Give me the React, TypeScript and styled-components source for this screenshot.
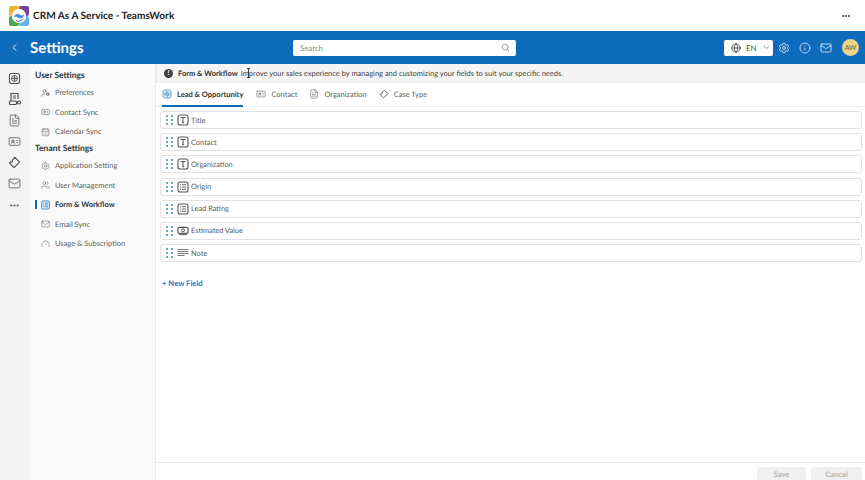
import React from "react";
import styled, { createGlobalStyle } from "styled-components";
import {
  ChevronLeft, ChevronDown, Search, Globe, Settings, Info, Mail, MoreHorizontal,
  UserCog, IdCard, CalendarDays, Users, Gauge, FileText,
} from "lucide-react";

const Global = createGlobalStyle`
  html, body { margin: 0; padding: 0; height: 100%; background: #fff; }
  #root { height: 100%; }
  * { box-sizing: border-box; }
  body { font-family: "Lato", "Noto Sans", "Liberation Sans", sans-serif; color: #333; text-rendering: geometricPrecision; }
`;

const Page = styled.div`
  width: 865px; height: 480px; overflow: hidden;
  display: flex; flex-direction: column;
`;
const TitleBar = styled.header`
  height: 31px; flex: none; display: flex; align-items: center;
  padding: 0 14px 0 9px; background: #fff;
`;
const AppName = styled.div`
  margin-left: 4px; font-size: 10.1px; font-weight: 700; color: #222;
  flex: 1;
`;
const HeaderBar = styled.div`
  height: 33px; flex: none; background: #0f6cbd; display: flex; align-items: center;
  padding: 0 6px 0 9px; color: #fff;
`;
const BackBtn = styled.span`display: flex; width: 11px; margin-right: 10px;`;
const PageTitle = styled.div`font-size: 15px; font-weight: 700; width: 263px; color: #fff;`;
const SearchBox = styled.div`
  width: 223px; height: 16px; background: #fff; border-radius: 2px;
  display: flex; align-items: center; justify-content: space-between; padding: 0 6px 0 7px;
  font-size: 7.8px; color: #8a8a8a;
`;
const HeaderRight = styled.div`
  margin-left: auto; display: flex; align-items: center; color: #fff;
`;
const LangBtn = styled.div`
  width: 49px; height: 16px; background: #fff; border-radius: 2px; color: #555;
  display: flex; align-items: center; padding-left: 7px; gap: 5px; font-size: 8px;
`;
const HeadIcon = styled.span`display: flex; width: 21px; justify-content: center;`;
const Avatar = styled.div`
  width: 17px; height: 17px; border-radius: 50%; background: #ecd48e; color: #6b5b2b;
  font-size: 7px; display: flex; align-items: center; justify-content: center; margin-left: 6px;
`;
const Body = styled.div`flex: 1; display: flex; min-height: 0;`;
const Rail = styled.nav`
  width: 29px; background: #f3f3f3; display: flex; flex-direction: column; align-items: center;
  padding-top: 7px; gap: 7.2px; color: #505050; flex: none;
`;
const RailIcon = styled.span`display: flex; width: 14px; height: 14px; align-items: center; justify-content: center;`;
const Side = styled.aside`
  width: 127px; flex: none; background: #fafafa; padding: 6px 0 0 6px;
  border-right: 1px solid #ececec;
`;
const SideHeading = styled.div`
  font-size: 8.5px; font-weight: 700; color: #333; height: 11px; line-height: 11px;
  margin-bottom: 2px;
`;
const SideGroup = styled.div`margin-bottom: 1px;`;
const SideItem = styled.div<{ $active?: boolean }>`
  height: 19.6px; display: flex; align-items: center; font-size: 7.5px; position: relative;
  color: ${p => (p.$active ? "#333" : "#616161")};
  font-weight: ${p => (p.$active ? 700 : 400)};
  padding-left: 6px; gap: 5px;
  ${p => p.$active && `&::before { content: ""; position: absolute; left: 0; top: 5px; height: 9px; width: 2px; background: #0f6cbd; }`}
`;
const SideIcon = styled.span<{ $active?: boolean }>`
  display: flex; width: 9px; justify-content: center; color: ${p => (p.$active ? "#2a7fc6" : "#555")};
`;
const Main = styled.main`flex: 1; min-width: 0; display: flex; flex-direction: column;`;
const InfoBar = styled.div`
  height: 19px; flex: none; background: #f5f5f5; display: flex; align-items: center; position: relative;
  padding-left: 7px; font-size: 7.5px; color: #444; gap: 5px; border-left: 1px solid #e6e6e6;
  border-bottom: 1px solid #eee;
`;
const InfoDot = styled.span`
  width: 9px; height: 9px; border-radius: 50%; background: #424242; color: #fff;
  display: flex; align-items: center; justify-content: center; font-size: 7px; font-weight: 700; line-height: 1;
`;
const Strong = styled.b`font-weight: 700; color: #333; margin-right: 1px;`;
const Caret = styled.span`
  position: absolute; left: 90px; top: 4px; width: 3px; height: 10px;
  border-top: 1px solid #444; border-bottom: 1px solid #444;
  &::after { content: ""; position: absolute; left: 1px; top: 0; bottom: 0; width: 1px; background: #444; }
`;
const Tabs = styled.div`
  height: 24px; flex: none; display: flex; padding-left: 6px;
  border-bottom: 1px solid #eee;
`;
const Tab = styled.div<{ $active?: boolean; $gap: number }>`
  display: flex; align-items: center; gap: 5px; font-size: 7.5px;
  margin-right: ${p => p.$gap}px;
  color: ${p => (p.$active ? "#333" : "#616161")};
  font-weight: ${p => (p.$active ? 700 : 400)};
  border-bottom: ${p => (p.$active ? "2px solid #0f6cbd" : "2px solid transparent")};
  height: 24px; margin-bottom: -1px;
`;
const TabIcon = styled.span<{ $active?: boolean }>`display: flex; color: ${p => (p.$active ? "#2a7fc6" : "#555")};`;
const Fields = styled.div`
  display: flex; flex-direction: column; gap: 4.2px; padding: 4px 3px 0 4px;
`;
const FieldRow = styled.div`
  height: 18px; border: 1px solid #e2e2e2; border-radius: 3px; background: #fff;
  display: flex; align-items: center; padding-left: 5px; font-size: 7.4px; color: #5c5c5c; gap: 2px;
`;
const Grip = styled.span`display: flex; color: #1f6fb5; width: 7px; margin-right: 2px; justify-content: center;`;
const FieldIcon = styled.span`display: flex; width: 12px; justify-content: center; color: #555;`;
const NewField = styled.div`
  margin: 15.5px 0 0 6px; font-size: 7.7px; font-weight: 700; color: #2a78bd; height: 11px; line-height: 11px;
`;
const Spacer = styled.div`flex: 1;`;
const Footer = styled.footer`
  height: 18px; flex: none; border-top: 1px solid #ececec; display: flex; justify-content: flex-end;
  gap: 5px; padding: 4px 3px 0 0;
`;
const FootBtn = styled.div<{ $w: number }>`
  width: ${p => p.$w}px; height: 14px; background: #f0f0f0; border-radius: 2px 2px 0 0;
  color: #b5b5b5; font-size: 7.6px; font-weight: 700; display: flex; align-items: center; justify-content: center;
`;

const Logo = () => (
  <svg width="20" height="20" viewBox="0 0 20 20">
    <rect x="0" y="0" width="10" height="10" rx="2" fill="#f0b429" />
    <rect x="10" y="0" width="10" height="10" rx="2" fill="#7a3f98" />
    <rect x="0" y="10" width="10" height="10" rx="2" fill="#4aa84a" />
    <rect x="10" y="10" width="10" height="10" rx="2" fill="#5db5e6" />
    <circle cx="10" cy="10" r="7.2" fill="#fff" />
    <path d="M4.5 11.5c1.5-3.5 4-4.5 6-3s3.5 1.5 5-1c-.5 4-3.500 6-6 4.500s-3.500-1.500-5-.5z" fill="#4a8fd0" />
    <path d="M7 14.500c2.500 1 5.500.5 7.500-2" stroke="#7a6fc0" strokeWidth="1.200" fill="none" />
  </svg>
);
const TIcon = () => (
  <svg width="12" height="12" viewBox="0 0 12 12" fill="none" stroke="currentColor">
    <rect x="1" y="1" width="10" height="10" rx="2" strokeWidth="1.100" />
    <path d="M3.500 3.500h5M6 3.500v5.200M5 8.700h2" strokeWidth="1" />
  </svg>
);
const ListIcon = () => (
  <svg width="12" height="12" viewBox="0 0 12 12" fill="none" stroke="currentColor">
    <rect x="1" y="1" width="10" height="10" rx="2" strokeWidth="1.100" />
    <path d="M3 3.700h1M5 3.700h4M3 6h1M5 6h4M3 8.300h1M5 8.300h4" strokeWidth=".9" />
  </svg>
);
const MoneyIcon = () => (
  <svg width="13" height="12" viewBox="0 0 13 12" fill="none" stroke="currentColor">
    <rect x="1" y="2" width="11" height="6.500" rx="1.500" strokeWidth="1.300" />
    <circle cx="6.500" cy="5.200" r="1.700" strokeWidth="1" />
    <path d="M2 10h9" strokeWidth="1" />
  </svg>
);
const NoteIcon = () => (
  <svg width="12" height="12" viewBox="0 0 12 12" fill="none" stroke="#777">
    <path d="M.5 2.500h11M.5 4.500h11M.5 6.500h11M.5 8.500h7" strokeWidth="1" />
  </svg>
);
const GripDots = () => (
  <svg width="7" height="10" viewBox="0 0 7 10" fill="currentColor">
    {[1, 5, 9].map(y => [1, 6].map(x => <rect key={`${x}${y}`} x={x - 0.8} y={y - 0.8} width="1.600" height="1.600" />))}
  </svg>
);
const BoardIcon = ({ size = 13 }: { size?: number }) => (
  <svg width={size} height={size} viewBox="0 0 14 14" fill="none" stroke="currentColor">
    <rect x="1.500" y="1.500" width="11" height="11" rx="2.500" strokeWidth="1.100" />
    <circle cx="7" cy="7" r="3.200" strokeWidth="1" />
    <path d="M3.800 7h6.400M7 3.800v6.400" strokeWidth="1" />
  </svg>
);
const FormIcon = () => (
  <svg width="10" height="10" viewBox="0 0 10 10" fill="#d8e9f6" stroke="#2a7fc6">
    <rect x=".5" y=".5" width="9" height="9" rx="1.500" strokeWidth=".9" />
    <path d="M2 3h1M4 3h4M2 5h1M4 5h4M2 7h1M4 7h4" strokeWidth=".8" />
  </svg>
);
const TicketIcon = ({ size = 13 }: { size?: number }) => (
  <svg width={size} height={size} viewBox="0 0 14 14" fill="none" stroke="currentColor" strokeWidth="1.200" strokeLinejoin="round">
    <path d="M7.500 1.500L12.500 6.500 6.500 12.500 1.500 7.500 2.700 6.300a1.200 1.200 0 0 0 1.700-1.700z" />
  </svg>
);
const DealIcon = () => (
  <svg width="14" height="14" viewBox="0 0 14 14" fill="none" stroke="currentColor" strokeWidth="1.200">
    <path d="M3 9V1.500h7V7M5 4h3M5 6h3" />
    <rect x="1.500" y="9" width="7" height="3.500" rx="1" />
    <circle cx="11" cy="10.500" r="1.500" />
  </svg>
);

const fields: [string, React.ReactNode][] = [
  ["Title", <TIcon />], ["Contact", <TIcon />], ["Organization", <TIcon />],
  ["Origin", <ListIcon />], ["Lead Rating", <ListIcon />],
  ["Estimated Value", <MoneyIcon />], ["Note", <NoteIcon />],
];

export default function App() {
  return (
    <Page>
      <Global />
      <TitleBar>
        <Logo />
        <AppName>CRM As A Service - TeamsWork</AppName>
        <MoreHorizontal size={10} color="#333" strokeWidth={2.5} />
      </TitleBar>
      <HeaderBar>
        <BackBtn><ChevronLeft size={11} /></BackBtn>
        <PageTitle>Settings</PageTitle>
        <SearchBox>Search<Search size={9} color="#888" /></SearchBox>
        <HeaderRight>
          <LangBtn><Globe size={10} color="#444" />EN<ChevronDown size={9} color="#777" /></LangBtn>
          <HeadIcon><Settings size={12} strokeWidth={1.4} /></HeadIcon>
          <HeadIcon><Info size={12} strokeWidth={1.4} /></HeadIcon>
          <HeadIcon><Mail size={12} strokeWidth={1.4} /></HeadIcon>
          <Avatar>AW</Avatar>
        </HeaderRight>
      </HeaderBar>
      <Body>
        <Rail>
          <RailIcon><BoardIcon /></RailIcon>
          <RailIcon><DealIcon /></RailIcon>
          <RailIcon><FileText size={13} strokeWidth={1.4} /></RailIcon>
          <RailIcon><IdCard size={13} strokeWidth={1.4} /></RailIcon>
          <RailIcon><TicketIcon /></RailIcon>
          <RailIcon><Mail size={13} strokeWidth={1.4} /></RailIcon>
          <RailIcon><MoreHorizontal size={11} strokeWidth={2.5} /></RailIcon>
        </Rail>
        <Side>
          <SideGroup>
            <SideHeading>User Settings</SideHeading>
            <SideItem><SideIcon><UserCog size={10} strokeWidth={1.3} /></SideIcon>Preferences</SideItem>
            <SideItem><SideIcon><IdCard size={10} strokeWidth={1.3} /></SideIcon>Contact Sync</SideItem>
            <SideItem><SideIcon><CalendarDays size={10} strokeWidth={1.3} /></SideIcon>Calendar Sync</SideItem>
          </SideGroup>
          <SideGroup>
            <SideHeading>Tenant Settings</SideHeading>
            <SideItem><SideIcon><Settings size={10} strokeWidth={1.3} /></SideIcon>Application Setting</SideItem>
            <SideItem><SideIcon><Users size={10} strokeWidth={1.3} /></SideIcon>User Management</SideItem>
            <SideItem $active><SideIcon $active><FormIcon /></SideIcon>Form &amp; Workflow</SideItem>
            <SideItem><SideIcon><Mail size={10} strokeWidth={1.3} /></SideIcon>Email Sync</SideItem>
            <SideItem><SideIcon><Gauge size={10} strokeWidth={1.3} /></SideIcon>Usage &amp; Subscription</SideItem>
          </SideGroup>
        </Side>
        <Main>
          <InfoBar>
            <InfoDot>!</InfoDot>
            <span><Strong>Form &amp; Workflow</Strong> Improve your sales experience by managing and customizing your fields to suit your specific needs.</span>
            <Caret />
          </InfoBar>
          <Tabs>
            <Tab $active $gap={13}><TabIcon $active><BoardIcon size={10} /></TabIcon>Lead &amp; Opportunity</Tab>
            <Tab $gap={12}><TabIcon><IdCard size={10} strokeWidth={1.3} /></TabIcon>Contact</Tab>
            <Tab $gap={12}><TabIcon><FileText size={10} strokeWidth={1.3} /></TabIcon>Organization</Tab>
            <Tab $gap={0}><TabIcon><TicketIcon size={10} /></TabIcon>Case Type</Tab>
          </Tabs>
          <Fields>
            {fields.map(([name, icon]) => (
              <FieldRow key={name}>
                <Grip><GripDots /></Grip>
                <FieldIcon>{icon}</FieldIcon>
                {name}
              </FieldRow>
            ))}
          </Fields>
          <NewField>+ New Field</NewField>
          <Spacer />
          <Footer>
            <FootBtn $w={49}>Save</FootBtn>
            <FootBtn $w={51}>Cancel</FootBtn>
          </Footer>
        </Main>
      </Body>
    </Page>
  );
}
